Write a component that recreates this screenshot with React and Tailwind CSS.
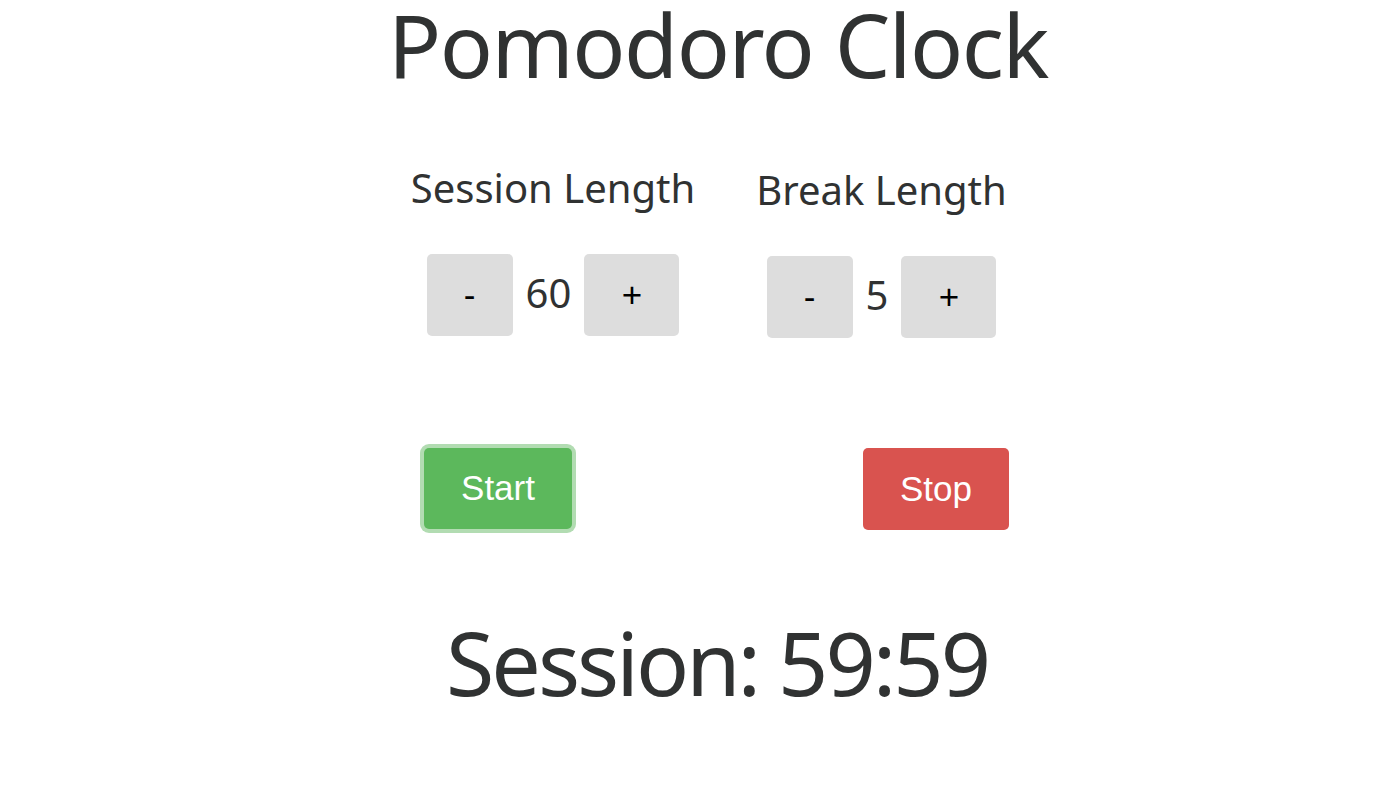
import React, { useState } from 'react'

const sans = { fontFamily: '"Noto Sans", "Open Sans", sans-serif' }

function Stepper({ label, value, onDec, onInc, className = '' }) {
  return (
    <div className={`flex flex-col items-center ${className}`}>
      <h2 className="text-[40px] leading-[40px] text-[#303232] whitespace-nowrap">{label}</h2>
      <div className="mt-[46px] flex items-center gap-[13px]">
        <button
          onClick={onDec}
          className="w-[86px] h-[82px] rounded-[5px] bg-[#dddddd] text-black text-[35px] font-['Liberation_Sans',Arial,sans-serif] flex items-center justify-center"
        >
          -
        </button>
        <span className="text-[40px] leading-[40px] text-[#303232] -mt-[4px]">{value}</span>
        <button
          onClick={onInc}
          className="w-[95px] h-[82px] rounded-[5px] bg-[#dddddd] text-black text-[35px] font-['Liberation_Sans',Arial,sans-serif] flex items-center justify-center"
        >
          +
        </button>
      </div>
    </div>
  )
}

export default function App() {
  const [session, setSession] = useState(60)
  const [brk, setBrk] = useState(5)

  return (
    <div className="min-h-screen bg-white" style={sans}>
      <div className="flex justify-center pl-[38px]">
        <h1 className="text-[88px] leading-[88px] tracking-[-1.5px] text-[#303232] whitespace-nowrap">
          Pomodoro Clock
        </h1>
      </div>

      <div className="mt-[80px] flex justify-center pl-[18px] gap-[61px]">
        <Stepper
          className="w-[286px]"
          label="Session Length"
          value={session}
          onDec={() => setSession((v) => Math.max(1, v - 1))}
          onInc={() => setSession((v) => v + 1)}
        />
        <Stepper
          className="w-[249px] pt-[2px]"
          label="Break Length"
          value={brk}
          onDec={() => setBrk((v) => Math.max(1, v - 1))}
          onInc={() => setBrk((v) => v + 1)}
        />
      </div>

      <div className="mt-[110px] flex justify-center pl-[35px]">
        <div className="flex items-start gap-[291px] font-['Liberation_Sans',Arial,sans-serif]">
          <button className="w-[148px] h-[81px] rounded-[5px] bg-[#5cb85c] text-white text-[35px] ring-4 ring-[#b2dcb2]">
            Start
          </button>
          <button className="w-[146px] h-[82px] rounded-[5px] bg-[#d9534f] text-white text-[35px]">
            Stop
          </button>
        </div>
      </div>

      <div className="mt-[88px] flex justify-center pl-[36px]">
        <p className="text-[88px] leading-[88px] tracking-[-3px] text-[#303232] whitespace-nowrap">
          Session: 59:59
        </p>
      </div>
    </div>
  )
}
